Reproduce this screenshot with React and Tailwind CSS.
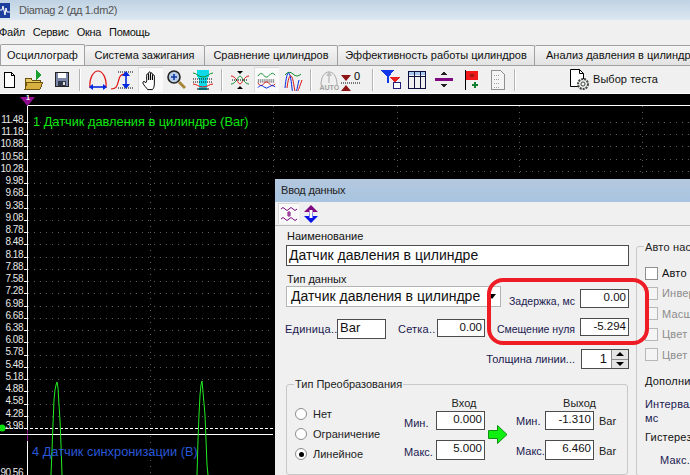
import React from "react";

const labels = ["11.48","11.18","10.88","10.58","10.28","9.98","9.68","9.38","9.08","8.78","8.48","8.18","7.88","7.58","7.28","6.98","6.68","6.38","6.08","5.78","5.48","5.18","4.88","4.58","4.28","3.98"];
const tabs = [["Система зажигания","w-[120px] justify-center"],["Сравнение цилиндров","w-[133px] justify-center"],["Эффективность работы цилиндров","w-[197px] justify-center"],["Анализ давления в цилиндрах","w-[190px] pl-[11px]"]];

const Ic = ({ w = 22, h = 22, pressed, children, className = "" }) => (
  <div className={`flex items-center justify-center shrink-0 h-[25px] ${pressed ? "bg-[#fafafa] border-l border-t border-[#dcdcdc]" : ""} ${className}`} style={{ width: w }}>
    <svg width={w} height={h} viewBox={`0 0 ${w} ${h}`} fill="none" shapeRendering="crispEdges">{children}</svg>
  </div>
);
const Sep = ({ className = "" }) => <div className={`w-[2px] h-[22px] bg-[#b4b4b4] border-r border-white shrink-0 ${className}`} />;

function Toolbar() {
  return (
    <div className="flex items-center h-[27px] bg-[#f0f0f0] pl-[1px]">
      <Ic w={15} h={18} className="ml-[1px]"><path d="M2.5 1.5h7l3 3v12h-10z" fill="#fff" stroke="#000" /><path d="M9.5 1.5v3h3" stroke="#000" /></Ic>
      <Ic w={20} className="ml-[7px]"><path d="M1 9h6l1 2h9l-2 9H1z" fill="#e8c860" stroke="#6a5210" /><path d="M3 13h16l-3 7H1z" fill="#d8b040" stroke="#6a5210" /><path d="M12 1l6 5-6 5z" fill="#18a030" /></Ic>
      <Ic w={16} className="ml-[10px]"><path d="M1.5 3.5h13v14h-13z" fill="#7c86a8" stroke="#222" /><path d="M4 4h8v5H4z" fill="#fff" /><path d="M4 12h8v5H4z" fill="#30384c" /><path d="M9 13h2v3H9z" fill="#ddd" /></Ic>
      <Sep className="ml-[9px]" />
      <Ic w={20} className="ml-[7px]"><g shapeRendering="auto"><path d="M2 19C1 8 6 2 10 2s9 6 8 17" stroke="#e01010" strokeWidth="1.2" /><path d="M2 18h16" stroke="#0028e0" strokeWidth="1.6" /><path d="M1 18l4-3v6zM19 18l-4-3v6z" fill="#0028e0" /></g></Ic>
      <Ic w={24} className="ml-[3px]"><g shapeRendering="auto"><path d="M0 20c6 0 6-3 8-10 1-4 3-5 6-5" stroke="#e01010" strokeWidth="1.2" /><path d="M7 3h16M7 19h16" stroke="#000" strokeDasharray="1 1" /><path d="M15 5v13" stroke="#0028e0" strokeWidth="1.6" /><path d="M15 2l-4 5h8zM15 20l-4-5h8z" fill="#0028e0" /></g></Ic>
      <Ic w={25} pressed className="ml-[3px]"><g shapeRendering="auto"><path d="M8 12V6c0-2 2-2 2 0v5-7c0-2 2-2 2 0v7-6c0-2 2-2 2 0v6-4c0-2 2-2 2 0v8c0 3-1 5-2 6H9c-1-2-4-4-5-7 0-2 2-2 3 0z" fill="#fff" stroke="#000" /></g></Ic>
      <Ic w={20} className="ml-[3px]"><g shapeRendering="auto"><circle cx="8" cy="8" r="6" fill="#b8cce4" stroke="#222" strokeWidth="1.6" /><path d="M5 8h6M8 5v6" stroke="#1038a0" strokeWidth="1.6" /><path d="M13 13l6 6" stroke="#a88838" strokeWidth="3" /></g></Ic>
      <Ic w={22} className="ml-[6px]"><path d="M5 1h12v6l-2 4v10H7V11L5 7z" fill="#10d8e8" /><g shapeRendering="auto"><path d="M1 4c4 0 5 4 10 4s6-4 10-4" stroke="#109030" /><path d="M1 10h20M1 13h20" stroke="#000" strokeDasharray="1 1" /><path d="M1 15c4 0 5 3 10 3s6-3 10-3" stroke="#e01010" /><path d="M5 20h12" stroke="#000" /></g></Ic>
      <Sep className="ml-[7px]" />
      <Ic w={20} className="ml-[7px]"><g shapeRendering="auto"><path d="M1 7c5 0 7 8 9 8s4-8 9-8" stroke="#e01010" /><path d="M1 15c5 0 7-8 9-8s4 8 9 8" stroke="#109030" /><path d="M2 11h16" stroke="#000" strokeDasharray="1 1" /><path d="M10 5l-3-3h6zM10 17l-3 3h6z" fill="#000" /></g></Ic>
      <Ic w={25} pressed className="ml-[4px]"><g shapeRendering="auto"><path d="M3 7q3-5 6-1t6 0 6 0" stroke="#109030" /><path d="M3 11h18M3 13h18" stroke="#000" strokeDasharray="1 1" /><path d="M3 14q3 5 6 1t6 0 6 0" stroke="#e01010" /><path d="M3 19q3-4 6-1t6 0 6 0" stroke="#0028e0" /></g></Ic>
      <Ic w={20} className="ml-[5px]"><g shapeRendering="auto"><path d="M1 6q4-5 8-1t8 0" stroke="#109030" /><path d="M1 19c2-20 5-20 7 0s5 0 7-8" stroke="#0028e0" /><path d="M3 19c2-16 5-16 7-2s5 2 8-6" stroke="#e01010" /></g></Ic>
      <Sep className="ml-[6px]" />
      <Ic w={20} className="ml-[7px]"><g shapeRendering="auto"><path d="M2 16C2 7 6 3 10 3s8 4 8 13" stroke="#a8a8a8" /><path d="M10 3v11" stroke="#a8a8a8" /><path d="M10 2L7 7h6z" fill="#c0c0c0" /></g><text x="0.5" y="20.5" fontSize="7" fontWeight="700" fill="#a0a0a0" fontFamily="Liberation Sans">AUTO</text></Ic>
      <div className="relative ml-[2px] w-[24px] h-[25px] shrink-0">
        <svg width="24" height="25" viewBox="0 0 24 25" className="absolute inset-0"><path d="M0 16h20" stroke="#000" strokeDasharray="1 1" /><path d="M0 8l5 6 5-6zM0 24l5-6 5 6z" fill="#8c1414" /></svg>
        <span className="absolute left-[13px] top-[3px] text-[11px] leading-[13px] text-black">0</span>
      </div>
      <Sep className="ml-[7px]" />
      <Ic w={20} className="ml-[7px]"><path d="M0 1h13L8 8v6H6V8z" fill="#1038e8" /><path d="M8 8h11l-4 4v5h-2v-5z" fill="#e82020" /><path d="M12.5 13.5h7v6h-7z" fill="#fff" stroke="#202080" /></Ic>
      <Ic w={19} className="ml-[7px]"><path d="M1 2h17v4H1z" fill="#a8c8f0" /><path d="M.5 2.5h17v17H.5zM.5 7.5h17M6.5 2.5v17M12.5 2.5v17" stroke="#101040" /></Ic>
      <Ic w={20} className="ml-[7px]"><path d="M1 9h18v3H1z" fill="#800880" /><path d="M10 2l-3 4h6zM10 19l-3-4h6z" fill="#222" /></Ic>
      <Ic w={16} className="ml-[10px]"><path d="M1 1v20" stroke="#000" /><path d="M2 2h12v9H2z" fill="#f01818" /><path d="M6 5h4v3H6z" fill="#a01818" /><path d="M8 15h6v2H8zM10 13h2v6h-2z" fill="#108030" /></Ic>
      <Ic w={16} className="ml-[10px]"><path d="M1.5 1.5h9l4 4v15h-13z" fill="#f4f4f4" stroke="#909090" /><path d="M4 6h6M4 10h6M4 14h6M4 18h6" stroke="#a0a0a0" strokeDasharray="1 1" /></Ic>
      <Sep className="ml-[8px]" />
      <div className="flex items-center ml-[53px] shrink-0">
        <svg width="21" height="23" viewBox="0 0 21 23" fill="none"><path d="M1.5 1.5h9l4 4v13h-13z" fill="#fff" stroke="#000" /><path d="M10.5 1.5v4h4" stroke="#000" /><circle cx="14" cy="16" r="5" fill="#e8e8e8" stroke="#404840" strokeWidth="2" strokeDasharray="2 1" /><circle cx="14" cy="16" r="2" fill="#fff" stroke="#404840" /></svg>
        <span className="ml-[3px] text-[11px] text-[#111] tracking-[0.05px]">Выбор теста</span>
      </div>
    </div>
  );
}

function ChartDrawing() {
  const ys = labels.map((_, i) => 122 + i * 12.24);
  return (
    <svg className="absolute inset-0" width="690" height="381" viewBox="0 94 690 381" fill="none">
      {[150.5, 273.5, 397.5, 519.5, 642.5].map((x) => <path key={x} d={`M${x} 106V475`} stroke="#5c5c5c" strokeDasharray="1 5" />)}
      {ys.slice(0, -1).map((y) => <path key={y} d={`M28 ${Math.round(y) + 0.5}H690`} stroke="#5c5c5c" strokeDasharray="1 5" />)}
      {ys.map((y) => <path key={y} d={`M24 ${Math.round(y) + 0.5}H27`} stroke="#fff" />)}
      <path d="M27 105.500H690" stroke="#fff" />
      <path d="M27.5 105V430M27.5 441V475" stroke="#fff" />
      <path d="M27.5 430V441M27.5 98V105" stroke="#900c90" />
      <path d="M20 97h15l-7.500 9z" fill="#900c90" />
      <path d="M0 428.500H690" stroke="#fff" strokeDasharray="3 2" />
      <path d="M0 434.500H690" stroke="#fff" />
      <circle cx="2" cy="428" r="3.500" fill="#10e010" />
      <path d="M51 475L52 450 53 424 54 400 55 390 56 385 57 382 58 388 59 405 60 420 61 445 62 475" stroke="#20ee20" />
      <path d="M197 475L198 440 199 415 200 395 201 385 202 381 203 392 205 415 206 440 207 465 208 475" stroke="#20ee20" />
    </svg>
  );
}

const Field = ({ value, className = "", align = "text-right" }) => (
  <div className={`border border-[#4c4c4c] bg-white text-[11.5px] leading-[15px] text-[#111] px-[2px] overflow-hidden whitespace-nowrap shrink-0 ${align} ${className}`}>{value}</div>
);
const Box = ({ disabled, label }) => (
  <div className="flex items-center h-[20.4px]">
    <div className={`w-[13px] h-[13px] border bg-[#f4f4f4] ${disabled ? "border-[#b8b8b8]" : "border-[#8e8f8f] bg-white"}`} />
    <span className={`ml-[4px] text-[11px] tracking-[0.2px] whitespace-nowrap ${disabled ? "text-[#8c8c8c]" : "text-[#111]"}`}>{label}</span>
  </div>
);
const Radio = ({ on, label }) => (
  <div className="flex items-center h-[20px]">
    <div className="w-[12px] h-[12px] rounded-full border border-[#8c8c8c] bg-white flex items-center justify-center">
      {on && <div className="w-[5px] h-[5px] rounded-full bg-black" />}
    </div>
    <span className="ml-[6px] text-[11px] text-[#222]">{label}</span>
  </div>
);

function Dialog() {
  return (
    <div className="absolute left-[273px] top-[84px] w-[430px] h-[297px] bg-[#f0f0f0] border-l-2 border-t border-black overflow-hidden text-[11px]">
      <div className="h-[23px] bg-gradient-to-b from-[#b4c8de] to-[#a8c4e0] flex items-center pl-[6px] text-[11px] tracking-[-0.2px] text-[#222]">Ввод данных</div>
      <div className="h-[24px] border-b border-[#bcbcbc] flex items-center pl-[3px] gap-[4px]">
        <div className="w-[21px] h-[21px] bg-[#fafafa] border-l border-t border-[#d8d8d8] flex items-center justify-center">
          <svg width="18" height="18" viewBox="0 0 18 18" fill="none"><path d="M1 4q2-3 4 0t4 0 4 0 4 0M1 14q2-3 4 0t4 0 4 0 4 0" stroke="#800880" /><path d="M9 6v6M7 10h4M7 8h4" stroke="#800880" /></svg>
        </div>
        <svg width="16" height="18" viewBox="0 0 16 18"><path d="M8 0l7 7H10v3H6V7H1z" fill="#800880" /><path d="M8 18l7-7H10V8H6v3H1z" fill="#0a14e8" /><path d="M6.5 5h3v8h-3z" fill="#fff" /></svg>
      </div>
      <div className="flex pl-[11px] pt-[3px]">
        <div className="w-[343px] shrink-0">
          <div className="text-[11px] leading-[14px] text-[#111] whitespace-nowrap ml-[1px]">Наименование</div>
          <Field value="Датчик давления в цилиндре" align="text-left" className="w-[343px] h-[21px] mt-[2px] !text-[14px] !leading-[19px]" />
          <div className="text-[11px] leading-[14px] mt-[6px] text-[#111] ml-[1px]">Тип данных</div>
          <div className="flex">
            <div className="relative w-[215px] h-[21px] border border-[#b4b4b4] bg-white flex items-center pl-[4px] text-[14px] text-[#111] whitespace-nowrap overflow-hidden shrink-0">Датчик давления в цилиндре
              <div className="absolute right-[4px] top-[7px] w-0 h-0 border-x-[4px] border-x-transparent border-t-[5px] border-t-black" />
            </div>
            <div className="flex-1 min-w-0">
              <div className="flex items-center justify-end h-[19px] mt-[3px]"><span className="mr-[5px] text-[#1a1a50] text-[10.5px] whitespace-nowrap mt-[6px]">Задержка, мс</span><Field value="0.00" className="w-[49px] h-[19px]" /></div>
            </div>
          </div>
          <div className="flex items-center mt-[11px] h-[20px] relative">
            <span className="text-[11px] text-[#1a1a50] tracking-[0.2px] whitespace-nowrap w-[51px] -ml-[1px] mr-[1px]">Единица..</span>
            <Field value="Bar" align="text-left" className="w-[49px] h-[20px] !text-[13px]" />
            <span className="ml-[12px] text-[11px] text-[#1a1a50] tracking-[0.2px] w-[39px] whitespace-nowrap">Сетка..</span>
            <Field value="0.00" className="w-[48px] h-[18px] self-start" />
            <div className="flex-1 flex justify-end self-start -mt-[1px]">
              <span className="mr-[5px] text-[10.5px] text-[#1a1a50] whitespace-nowrap mt-[4px]">Смещение нуля</span>
              <Field value="-5.294" className="w-[49px] h-[18px]" />
            </div>
          </div>
          <div className="flex justify-end items-center h-[20px] mt-[10px]">
            <span className="text-[11px] text-[#1a1a50] mr-[6px]">Толщина линии...</span>
            <div className="w-[48px] h-[20px] border border-[#4c4c4c] bg-white flex justify-end">
              <span className="text-[13px] leading-[18px] pr-[4px] text-[#111]">1</span>
              <div className="w-[17px] flex flex-col bg-[#e4e4e4] border-l border-[#8c8c8c]">
                <div className="flex-1 flex items-center justify-center border-b border-[#8c8c8c]"><div className="w-0 h-0 border-x-[4px] border-x-transparent border-b-[4px] border-b-black" /></div>
                <div className="flex-1 flex items-center justify-center"><div className="w-0 h-0 border-x-[4px] border-x-transparent border-t-[4px] border-t-black" /></div>
              </div>
            </div>
          </div>
          <div className="relative w-[342px] h-[91px] mt-[15px] border border-[#c8c8c8] rounded-[3px] flex pl-[8px]">
            <span className="absolute left-[7px] -top-[8px] bg-[#f0f0f0] px-[1px] text-[11px] leading-[14px] text-[#222]">Тип Преобразования</span>
            <div className="pt-[19px] w-[109px] shrink-0">
              <Radio label="Нет" /><Radio label="Ограничение" /><Radio on label="Линейное" />
            </div>
            <div className="w-[82px] shrink-0 pt-[11px]">
              <div className="text-center pl-[38px] text-[11px] leading-[14px] text-[#222]">Вход</div>
              <div className="flex items-center h-[19px] mt-[1px]"><span className="w-[32px] pt-[5px] text-[#1a1a50]">Мин.</span><Field value="0.000" className="w-[49px] h-[19px]" /></div>
              <div className="flex items-center h-[20px] mt-[10px]"><span className="w-[32px] pt-[5px] text-[#1a1a50]">Макс.</span><Field value="5.000" className="w-[49px] h-[20px]" /></div>
            </div>
            <svg className="mt-[40px] ml-[2px] shrink-0" width="20" height="19" viewBox="0 0 20 19"><path d="M0.500 5.500h9v-5l9.500 9-9.500 9v-5h-9z" fill="#10f010" stroke="#109010" /></svg>
            <div className="pt-[11px] ml-[8px] shrink-0">
              <div className="text-center pl-[27px] text-[11px] leading-[14px] text-[#222]">Выход</div>
              <div className="flex items-center h-[19px] mt-[1px]"><span className="w-[29px] pt-[2px] text-[#1a1a50]">Мин.</span><Field value="-1.310" className="w-[49px] h-[19px]" /><span className="ml-[5px] text-[11px] text-[#222] pt-[2px]">Bar</span></div>
              <div className="flex items-center h-[20px] mt-[10px]"><span className="w-[29px] pt-[2px] text-[#1a1a50]">Макс.</span><Field value="6.460" className="w-[49px] h-[20px]" /><span className="ml-[5px] text-[11px] text-[#222] pt-[2px]">Bar</span></div>
            </div>
          </div>
        </div>
        <div className="relative ml-[7px] mt-[17px] w-[90px] h-[230px] border border-[#c8c8c8] rounded-[3px] pl-[8px] pt-[16px] shrink-0">
          <span className="absolute left-[7px] -top-[7px] bg-[#f0f0f0] px-[1px] text-[11px] leading-[14px] tracking-[0.2px] text-[#222] whitespace-nowrap">Авто настройка</span>
          <Box label="Авто" /><Box disabled label="Инверсия" /><Box disabled label="Масштаб" /><Box disabled label="Цвет" /><Box disabled label="Цвет" />
          <div className="mt-[9px] text-[11px] leading-[14px] tracking-[0.2px] text-[#111] whitespace-nowrap">Дополнительно</div>
          <div className="mt-[9px] text-[11px] leading-[14px] tracking-[0.2px] text-[#1a1a50] whitespace-nowrap">Интервал<br />мс</div>
          <div className="mt-[5px] text-[11px] leading-[14px] tracking-[0.2px] text-[#111] whitespace-nowrap">Гистерезис</div>
          <div className="mt-[9px] ml-[15px] text-[11px] leading-[14px] tracking-[0.2px] text-[#1a1a50]">Макс.</div>
        </div>
      </div>
      <div className="absolute left-[212px] top-[99px] w-[162px] h-[67px] border-[4px] border-[#ee1c25] rounded-[16px] pointer-events-none" />
    </div>
  );
}

export default function App() {
  return (
    <div className="relative w-[690px] h-[475px] overflow-hidden flex flex-col bg-[#f0f0f0] text-[#111]" style={{ fontFamily: '"Liberation Sans", Arial, sans-serif' }}>
      <div className="h-[20px] shrink-0 flex items-center bg-gradient-to-b from-[#bfd2e3] to-[#dce8f2]">
        <div className="w-[10px] h-[15px] bg-[#1c3f9e] flex items-center justify-center shrink-0">
          <svg width="10" height="11" viewBox="0 0 10 11"><path d="M0 5h2l1-4 2 9 1-7 1 4h3" stroke="#fff" fill="none" /></svg>
        </div>
        <span className="ml-[9px] text-[11px] tracking-[-0.3px] text-[#555]">Diamag 2 (дд 1.dm2)</span>
      </div>
      <div className="h-[24px] shrink-0 flex items-center gap-[8px] -ml-[1px] text-[11px] text-[#111] tracking-[-0.3px]">
        <span>Файл</span><span>Сервис</span><span>Окна</span><span>Помощь</span>
      </div>
      <div className="h-[22px] shrink-0 flex items-end border-b border-[#a0a0a0] overflow-hidden">
        <div className="w-[85px] h-[22px] shrink-0 flex items-center justify-center bg-[#f4f4f4] border-x border-t border-[#a0a0a0] rounded-t-[2px] text-[11px] -mb-[1px]">Осциллограф</div>
        {tabs.map(([t, w]) => (
          <div key={t} className={`${w} h-[20px] shrink-0 flex items-center bg-gradient-to-b from-[#f6f6f6] to-[#e2e2e2] border-r border-t border-[#a0a0a0] rounded-t-[2px] text-[11px] whitespace-nowrap overflow-hidden`}>{t}</div>
        ))}
      </div>
      <Toolbar />
      <div className="relative flex-1 bg-black border-t border-white">
        <ChartDrawing />
        <div className="absolute left-0 top-[20px] w-[23px] text-right text-[10px] leading-[12.24px] tracking-[-0.5px] text-[#e8e8e8]">
          {labels.map((l) => <div key={l} className="h-[12.24px]">{l}</div>)}
        </div>
        <span className="absolute left-[33px] top-[20px] text-[12.8px] leading-[16px] text-[#0ee60e] whitespace-nowrap">1 Датчик давления в цилиндре (Bar)</span>
        <span className="absolute left-[32px] top-[350px] text-[12.8px] leading-[16px] text-[#2858d8] whitespace-nowrap">4 Датчик синхронизации (В)</span>
        <span className="absolute left-0 top-[373px] w-[23px] text-right text-[10px] leading-[12px] tracking-[-0.5px] text-[#e8e8e8]">90.56</span>
        <span className="absolute left-[26px] top-[0px] w-[3px] text-[7px] leading-[8px] font-bold text-white">1</span>
        <Dialog />
      </div>
    </div>
  );
}
